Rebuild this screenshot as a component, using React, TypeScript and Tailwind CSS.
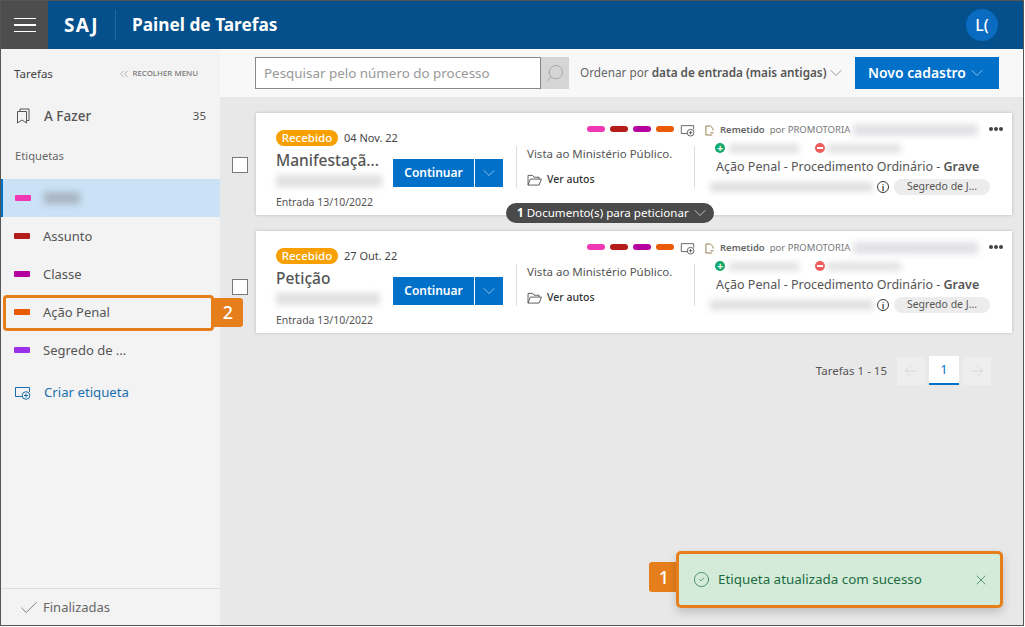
import React from "react";
import { ChevronDown, ChevronsLeft, ArrowLeft, ArrowRight, Check, X, CircleCheck, Search } from "lucide-react";

const tagColors = ["bg-[#f038b4]", "bg-[#b51c1c]", "bg-[#b4009e]", "bg-[#e85a04]"];

function LabelAddIcon({ className = "" }: { className?: string }) {
  return (
    <svg viewBox="0 0 17 14" fill="none" stroke="currentColor" strokeWidth="1" className={className}>
      <path d="M8 10.5H1.5V1.5H15.5V6" />
      <circle cx="12" cy="9.5" r="3.8" fill="none" />
      <path d="M12 7.5v4M10 9.5h4" />
    </svg>
  );
}

function Blur({ w, h = "h-[11px]", tone = "bg-[#c9c9c9]" }: { w: string; h?: string; tone?: string }) {
  return <div className={`${w} ${h} ${tone} blur-[3px] shrink-0`} />;
}

function Card({ title, date, doc, blurW, checkClass }: { title: string; date: string; doc?: boolean; blurW: string; checkClass: string }) {
  return (
    <div className="flex items-center pl-3 gap-2">
      <div className={`w-4 h-4 border border-[#777] bg-white shrink-0 ${checkClass}`} />
      <div className="relative w-[756px] h-[102px] bg-white shadow-[0_0_3px_rgba(0,0,0,0.2)] flex">
        <div className="w-[137px] shrink-0 pl-5 pt-[17px] flex flex-col">
          <div className="flex items-center h-4">
            <span className="w-[62px] shrink-0 h-4 rounded-full bg-[#f7a000] text-white text-[11.5px] font-medium flex items-center justify-center leading-none">Recebido</span>
            <span className="ml-[6px] text-[11px] text-[#444] whitespace-nowrap">{date}</span>
          </div>
          <div className="mt-[3px] h-[22px] text-[15.5px] font-medium text-[#555] leading-[22px] whitespace-nowrap">{title}</div>
          <div className="mt-[2px] h-[15px] flex items-center">
            <Blur w={blurW} h="h-[12px]" tone="bg-[#e0e0e0]" />
          </div>
          <div className="mt-[7px] text-[10.5px] text-[#555] leading-[14px] whitespace-nowrap">Entrada 13/10/2022</div>
        </div>
        <div className="w-[123px] shrink-0 pt-[46px]">
          <div className="flex gap-px h-7">
            <div className="w-[81px] bg-[#0070c9] text-white text-[12px] font-semibold flex items-center justify-center">Continuar</div>
            <div className="w-[28px] bg-[#0070c9] text-[#cfe4f6] flex items-center justify-center">
              <ChevronDown size={20} strokeWidth={0.8} />
            </div>
          </div>
        </div>
        <div className="w-[179px] shrink-0 flex flex-col">
          <div className="h-[33px] flex items-start justify-end gap-[6px] pt-[11px]">
            <div className="flex gap-[5px] pt-[2px]">
              {tagColors.map((c) => <div key={c} className={`w-[18px] h-[6px] rounded-full ${c}`} />)}
            </div>
            <LabelAddIcon className="w-[15px] h-[13px] text-[#555]" />
          </div>
          <div className="h-[42px] border-l border-r border-[#ddd] pl-[10px]">
            <div className="text-[11.5px] text-[#555] leading-[16px] whitespace-nowrap">Vista ao Ministério Público.</div>
            <div className="flex items-center gap-[5px] mt-[10px] text-[#333]">
              <svg viewBox="0 0 16 13" fill="none" stroke="#555" strokeWidth="1" className="w-[15px] h-[12px]">
                <path d="M1 12V1.5h5l1.5 2H13v2M1 12l2.5-6.5H15.5L13 12H1z" />
              </svg>
              <span className="text-[10.5px] font-medium">Ver autos</span>
            </div>
          </div>
        </div>
        <div className="flex-1 pl-[10px] pr-[9px] pt-[9px] flex flex-col">
          <div className="flex items-center h-[16px]">
            <svg viewBox="0 0 10 12" fill="none" stroke="#8a7440" strokeWidth="1" className="w-[9px] h-[11px] shrink-0">
              <path d="M1 1h5l3 3v2M1 1v10h7M6 8.5h3.5" />
            </svg>
            <span className="ml-[6px] text-[9.5px] font-semibold text-[#666] whitespace-nowrap">Remetido</span>
            <span className="ml-[5px] text-[9.5px] text-[#777] whitespace-nowrap">por PROMOTORIA</span>
            <div className="ml-[3px]"><Blur w="w-[125px]" h="h-[12px]" tone="bg-[#e2e2e6]" /></div>
            <span className="ml-auto flex gap-[1px] -translate-y-[1px]">
              <i className="w-1 h-1 rounded-full bg-[#444]" />
              <i className="w-1 h-1 rounded-full bg-[#444]" />
              <i className="w-1 h-1 rounded-full bg-[#444]" />
            </span>
          </div>
          <div className="flex items-center h-[18px] mt-[1px] pl-[10px]">
            <span className="w-[10px] h-[10px] rounded-full bg-[#13a86b] text-white text-[10px] font-bold leading-[10px] flex items-center justify-center">+</span>
            <div className="ml-[4px]"><Blur w="w-[70px]" h="h-[9px]" tone="bg-[#e2e2e2]" /></div>
            <span className="ml-[16px] w-[10px] h-[10px] rounded-full bg-[#ee5a5a] flex items-center justify-center">
              <i className="w-[6px] h-[2px] bg-white" />
            </span>
            <div className="ml-[2px]"><Blur w="w-[74px]" h="h-[9px]" tone="bg-[#e2e2e2]" /></div>
          </div>
          <div className="h-[18px] mt-[1px] pl-[11px] text-[12.5px] text-[#555] leading-[18px] whitespace-nowrap">
            Ação Penal - Procedimento Ordinário - <span className="font-semibold">Grave</span>
          </div>
          <div className="flex items-center mt-[3px] h-[16px] pl-[5px]">
            <Blur w="w-[163px]" h="h-[10px]" tone="bg-[#e0e0e0]" />
            <span className="ml-[4px] w-[12px] h-[12px] rounded-full border border-[#333] text-[#333] text-[9px] font-semibold leading-none flex items-center justify-center">i</span>
            <span className="ml-[5px] w-[96px] h-[16px] rounded-full bg-[#ececec] text-[10.5px] text-[#555] flex items-center justify-center whitespace-nowrap">Segredo de J...</span>
          </div>
        </div>
        {doc && (
          <div className="absolute left-[250px] top-[90px] w-[208px] h-5 rounded-full bg-[#4a4a4a] text-white text-[11.6px] flex items-center pl-[11px] gap-[1px] whitespace-nowrap z-10">
            <span><b>1</b> Documento(s) para peticionar</span>
            <ChevronDown size={20} strokeWidth={0.8} />
          </div>
        )}
      </div>
    </div>
  );
}

function LabelRow({ color, text, active, blur }: { color: string; text?: string; active?: boolean; blur?: boolean }) {
  return (
    <div className={`h-[38px] flex items-center pl-[13px] ${active ? "bg-[#cae1f6] border-l-2 border-[#0070c9] !pl-[12px]" : ""}`}>
      <div className={`w-4 h-[6px] rounded-[1px] ${color} shrink-0`} />
      {blur ? (
        <div className="ml-[13px]"><Blur w="w-[36px]" h="h-[12px]" tone="bg-[#a9b6c2]" /></div>
      ) : (
        <span className="ml-[13px] pt-[1px] text-[13px] text-[#555]">{text}</span>
      )}
    </div>
  );
}

export default function App() {
  return (
    <div className="relative w-[1024px] h-[626px] border border-[#555] bg-[#e8e8e8] flex flex-col overflow-hidden font-['Noto_Sans','Open_Sans',sans-serif]">
      <header className="h-[48px] shrink-0 bg-[#03508c] flex items-center text-white">
        <div className="w-[47px] h-full bg-[#4d4d4d] flex flex-col items-center justify-center gap-[5px]">
          <i className="w-[22px] h-[1.5px] bg-white" />
          <i className="w-[22px] h-[1.5px] bg-white" />
          <i className="w-[22px] h-[1.5px] bg-white" />
        </div>
        <span className="ml-[16px] w-[51px] text-[19px] font-bold tracking-[1.4px]">SAJ</span>
        <div className="w-px h-[30px] bg-[#1d6aa5]" />
        <span className="ml-[16px] text-[17.3px] font-bold">Painel de Tarefas</span>
        <div className="ml-auto mr-[25px] w-8 h-8 rounded-full bg-[#0a6cc0] text-[16px] font-medium flex items-center justify-center">L(</div>
      </header>
      <div className="flex-1 flex min-h-0">
        <aside className="w-[219px] shrink-0 bg-[#f3f3f3] flex flex-col">
          <div className="flex items-center justify-between h-[50px] pl-[13px] pr-[22px]">
            <span className="text-[11.5px] text-[#444]">Tarefas</span>
            <span className="flex items-center text-[7.9px] text-[#777] font-medium whitespace-nowrap"><ChevronsLeft size={14} strokeWidth={0.9} className="mr-[1px]" />RECOLHER MENU</span>
          </div>
          <div className="flex items-center h-[34px] pl-[15px] pr-[14px]">
            <svg viewBox="0 0 14 16" fill="none" stroke="#555" strokeWidth="1" className="w-[14px] h-[16px]">
              <path d="M1.5 3.5h9v11.5l-4.5-3-4.5 3zM4 3.5V1h9v11.5h-2.5" />
            </svg>
            <span className="ml-[14px] text-[13.5px] font-medium text-[#555]">A Fazer</span>
            <span className="ml-auto text-[11.5px] text-[#555]">35</span>
          </div>
          <div className="mt-[15px] h-4 pl-[14px] text-[11.2px] text-[#666] leading-4">Etiquetas</div>
          <div className="mt-[15px] flex flex-col">
            <LabelRow color="bg-[#f038b4]" active blur />
            <LabelRow color="bg-[#b51c1c]" text="Assunto" />
            <LabelRow color="bg-[#b4009e]" text="Classe" />
            <LabelRow color="bg-[#e85a04]" text="Ação Penal" />
            <LabelRow color="bg-[#9b30ea]" text="Segredo de ..." />
          </div>
          <div className="mt-[6px] h-[36px] flex items-center pl-[13px] text-[#1a6fb0]">
            <LabelAddIcon className="w-[17px] h-[14px]" />
            <span className="ml-[13px] text-[13.2px]">Criar etiqueta</span>
          </div>
          <div className="mt-auto h-[37px] border-t border-[#dcdcdc] flex items-center pl-[17px] pt-[2px]">
            <Check size={22} strokeWidth={0.8} className="text-[#555]" />
            <span className="ml-[3px] text-[13px] text-[#666]">Finalizadas</span>
          </div>
        </aside>
        <main className="flex-1 flex flex-col min-w-0">
          <div className="h-[48px] shrink-0 bg-[#f8f8f8] flex items-center pl-[35px]">
            <div className="w-[286px] h-8 border border-[#888] bg-white flex items-center pl-2 text-[13.4px] text-[#999] whitespace-nowrap">Pesquisar pelo número do processo</div>
            <div className="w-7 h-8 bg-[#d5d5d5] flex items-center justify-center">
              <Search size={20} strokeWidth={0.9} className="text-[#999] -scale-x-100" />
            </div>
            <div className="ml-[11px] flex items-center text-[11.75px] text-[#666] whitespace-nowrap">
              Ordenar por&nbsp;<span className="font-semibold text-[#555]">data de entrada (mais antigas)</span>
              <ChevronDown size={20} strokeWidth={0.8} className="ml-0" />
            </div>
            <div className="ml-[9px] w-[144px] h-8 bg-[#0070c9] text-white text-[13.9px] font-semibold flex items-center justify-center gap-[1px] whitespace-nowrap">
              Novo cadastro
              <ChevronDown size={20} strokeWidth={0.8} className="text-[#cfe4f6]" />
            </div>
          </div>
          <div className="flex flex-col gap-[16px] pt-[16px]">
            <Card title="Manifestaçã..." date="04 Nov. 22" doc blurW="w-[106px]" checkClass="mt-[2px]" />
            <Card title="Petição" date="27 Out. 22" blurW="w-[104px]" checkClass="mt-[10px]" />
          </div>
          <div className="mt-[23px] flex items-center justify-end pr-[32px]">
            <span className="text-[11.5px] text-[#555] mr-[10px] whitespace-nowrap">Tarefas 1 - 15</span>
            <div className="w-7 h-7 bg-[#eeeeee] text-[#d4d4d4] flex items-center justify-center"><ArrowLeft size={20} strokeWidth={0.9} /></div>
            <div className="w-[30px] h-[29px] mx-1 bg-white border-b-2 border-[#0070c9] text-[#0070c9] text-[12px] flex items-center justify-center">1</div>
            <div className="w-7 h-7 bg-[#eeeeee] text-[#d4d4d4] flex items-center justify-center"><ArrowRight size={20} strokeWidth={0.9} /></div>
          </div>
        </main>
      </div>

      <div className="absolute left-[2px] top-[294px] w-[211px] h-[36px] rounded-[4px] border-[3px] border-[#e67e1c]" />
      <div className="absolute left-[212px] top-[297px] w-[30px] h-[29px] rounded-r-[3px] bg-[#e67e1c] text-white text-[18px] font-medium flex items-center justify-center">2</div>

      <div className="absolute left-[648px] top-[561px] w-[30px] h-[30px] rounded-l-[3px] bg-[#e67e1c] text-white text-[18px] font-medium flex items-center justify-center">1</div>
      <div className="absolute left-[675px] top-[550px] w-[327px] h-[57px] rounded-[5px] border-[3px] border-[#e67e1c] bg-[#d4ebda] shadow-[0_4px_10px_rgba(0,0,0,0.18)] flex items-center pl-[14px] pr-[11px] text-[#1c6b3e]">
        <CircleCheck size={17} strokeWidth={1} />
        <span className="ml-[8px] text-[13.4px] whitespace-nowrap">Etiqueta atualizada com sucesso</span>
        <X size={16} strokeWidth={1} className="ml-auto" />
      </div>
    </div>
  );
}
